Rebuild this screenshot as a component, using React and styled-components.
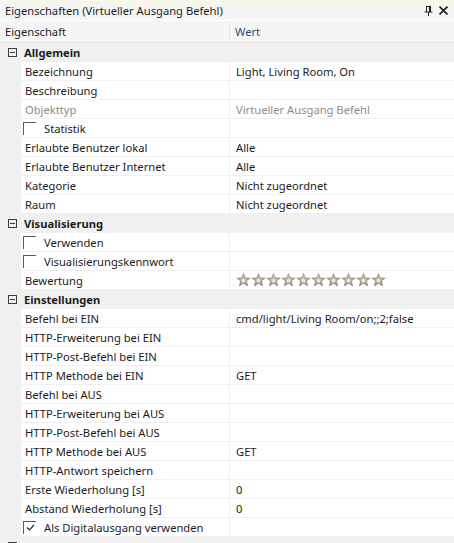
import React from "react";
import styled, { createGlobalStyle } from "styled-components";

const Global = createGlobalStyle`
  html, body { margin: 0; padding: 0; background: #f0f0f0; }
  body { overflow: hidden; }
`;

const Panel = styled.div`
  width: 454px;
  height: 543px;
  overflow: hidden;
  background: #f0f0f0;
  font-family: "Noto Sans", "Open Sans", sans-serif;
  font-size: 11.2px;
  color: #1b1b1b;
`;

const TitleBar = styled.div`
  height: 21px;
  box-sizing: border-box;
  border-top: 1px solid #fbf8e4;
  background: #f5f5f5;
  display: flex;
  align-items: center;
  justify-content: space-between;
  padding: 0 6px 0 5px;
  border-bottom: 1px solid #ffffff;
`;

const TitleText = styled.span`
  color: #1e1e1e;
  white-space: nowrap;
`;

const TitleIcons = styled.div`
  display: flex;
  align-items: center;
  gap: 6px;
`;

const Header = styled.div`
  display: grid;
  grid-template-columns: 229px 1fr;
  height: 22px;
  box-sizing: border-box;
  background: #f5f5f5;
  border-bottom: 1px solid #e3e3e3;
`;

const HeaderCell = styled.div`
  display: flex;
  align-items: center;
  padding-left: 5px;
  border-left: ${(p) => (p.$value ? "1px solid #e6e6e6" : "none")};
  color: ${(p) => (p.$value ? "#2a4a7a" : "#1e1e1e")};
`;

const CategoryRow = styled.div`
  height: 19px;
  display: flex;
  align-items: center;
  background: #f0f0f0;
  font-weight: bold;
  color: #1e1e1e;
  white-space: nowrap;
`;

const Expander = styled.span`
  width: 9px;
  height: 9px;
  box-sizing: border-box;
  border: 1px solid #3c3c3c;
  margin: 0 7px 0 8px;
  position: relative;
  flex: none;
  &::after {
    content: "";
    position: absolute;
    left: 1px;
    right: 1px;
    top: 3px;
    height: 1px;
    background: #3c3c3c;
  }
`;

const Row = styled.div`
  display: grid;
  grid-template-columns: 21px 208px 1fr;
  height: 19px;
`;

const Gutter = styled.div`
  background: #f0f0f0;
`;

const Cell = styled.div`
  background: #ffffff;
  border-bottom: 1px solid #f0f0f0;
  box-sizing: border-box;
  display: flex;
  align-items: center;
  padding-left: ${(p) => (p.$value ? "6px" : "4px")};
  border-left: ${(p) => (p.$value ? "1px solid #f0f0f0" : "none")};
  color: ${(p) => (p.$dim ? "#8d8d8d" : "#1b1b1b")};
  white-space: nowrap;
  overflow: hidden;
`;

const Check = styled.span`
  width: 13px;
  height: 13px;
  box-sizing: border-box;
  border-top: 1px solid #5a5a5a;
  border-left: 1px solid #5a5a5a;
  margin: 0 8px 0 -2px;
  flex: none;
  display: flex;
  align-items: center;
  justify-content: center;
`;

const Stars = styled.div`
  display: flex;
  gap: 0px;
`;

const Star = () => (
  <svg width="15" height="14" viewBox="0 0 15 14">
    <defs>
      <linearGradient id="sg" x1="0" y1="0" x2="0" y2="1">
        <stop offset="0" stopColor="#c9c3b4" />
        <stop offset="1" stopColor="#8f8878" />
      </linearGradient>
    </defs>
    <path
      d="M7.5 0.5 L9.3 4.9 L14.2 5.1 L10.4 8.1 L11.7 13 L7.5 10.3 L3.3 13 L4.6 8.1 L0.8 5.1 L5.7 4.9 Z"
      fill="url(#sg)"
      stroke="#8a8372"
      strokeWidth="0.6"
    />
    <path d="M7.5 4.3 L8.4 6.4 L10.7 6.6 L9 8 L9.5 10.2 L7.5 8.9 L5.5 10.2 L6 8 L4.3 6.6 L6.6 6.4 Z" fill="#ece8dc" />
  </svg>
);

const PinIcon = () => (
  <svg width="9" height="10" viewBox="0 0 9 10">
    <path d="M2 0.5 H7 M2.5 0.5 V6 M6.5 0.5 V6 M5.5 0.5 V6 M0.5 6 H8.5 M4.5 6 V10" stroke="#1e1e1e" strokeWidth="1" fill="none" />
  </svg>
);

const CloseIcon = () => (
  <svg width="9" height="9" viewBox="0 0 9 9">
    <path d="M0.5 0.5 L8.5 8.5 M8.5 0.5 L0.5 8.5" stroke="#1e1e1e" strokeWidth="1.6" />
  </svg>
);

const CheckMark = () => (
  <svg width="11" height="11" viewBox="0 0 11 11">
    <path d="M2 5.5 L4.5 8 L9 3" stroke="#2b2b2b" strokeWidth="1.2" fill="none" />
  </svg>
);

const data = [
  {
    cat: "Allgemein",
    rows: [
      { n: "Bezeichnung", v: "Light, Living Room, On" },
      { n: "Beschreibung", v: "" },
      { n: "Objekttyp", v: "Virtueller Ausgang Befehl", dim: true },
      { n: "Statistik", check: false },
      { n: "Erlaubte Benutzer lokal", v: "Alle" },
      { n: "Erlaubte Benutzer Internet", v: "Alle" },
      { n: "Kategorie", v: "Nicht zugeordnet" },
      { n: "Raum", v: "Nicht zugeordnet" },
    ],
  },
  {
    cat: "Visualisierung",
    rows: [
      { n: "Verwenden", check: false },
      { n: "Visualisierungskennwort", check: false },
      { n: "Bewertung", stars: 10 },
    ],
  },
  {
    cat: "Einstellungen",
    rows: [
      { n: "Befehl bei EIN", v: "cmd/light/Living Room/on;;2;false" },
      { n: "HTTP-Erweiterung bei EIN", v: "" },
      { n: "HTTP-Post-Befehl bei EIN", v: "" },
      { n: "HTTP Methode bei EIN", v: "GET" },
      { n: "Befehl bei AUS", v: "" },
      { n: "HTTP-Erweiterung bei AUS", v: "" },
      { n: "HTTP-Post-Befehl bei AUS", v: "" },
      { n: "HTTP Methode bei AUS", v: "GET" },
      { n: "HTTP-Antwort speichern", v: "" },
      { n: "Erste Wiederholung [s]", v: "0" },
      { n: "Abstand Wiederholung [s]", v: "0" },
      { n: "Als Digitalausgang verwenden", check: true },
    ],
  },
  { cat: "Logische Verknüpfung", rows: [] },
];

export default function App() {
  return (
    <Panel>
      <Global />
      <TitleBar>
        <TitleText>Eigenschaften (Virtueller Ausgang Befehl)</TitleText>
        <TitleIcons>
          <PinIcon />
          <CloseIcon />
        </TitleIcons>
      </TitleBar>
      <Header>
        <HeaderCell>Eigenschaft</HeaderCell>
        <HeaderCell $value>Wert</HeaderCell>
      </Header>
      {data.map((g) => (
        <React.Fragment key={g.cat}>
          <CategoryRow>
            <Expander />
            {g.cat}
          </CategoryRow>
          {g.rows.map((r) => (
            <Row key={r.n}>
              <Gutter />
              <Cell $dim={r.dim}>
                {r.check !== undefined && <Check>{r.check && <CheckMark />}</Check>}
                {r.n}
              </Cell>
              <Cell $value $dim={r.dim}>
                {r.stars ? (
                  <Stars>
                    {Array.from({ length: r.stars }).map((_, i) => (
                      <Star key={i} />
                    ))}
                  </Stars>
                ) : (
                  r.v
                )}
              </Cell>
            </Row>
          ))}
        </React.Fragment>
      ))}
    </Panel>
  );
}
